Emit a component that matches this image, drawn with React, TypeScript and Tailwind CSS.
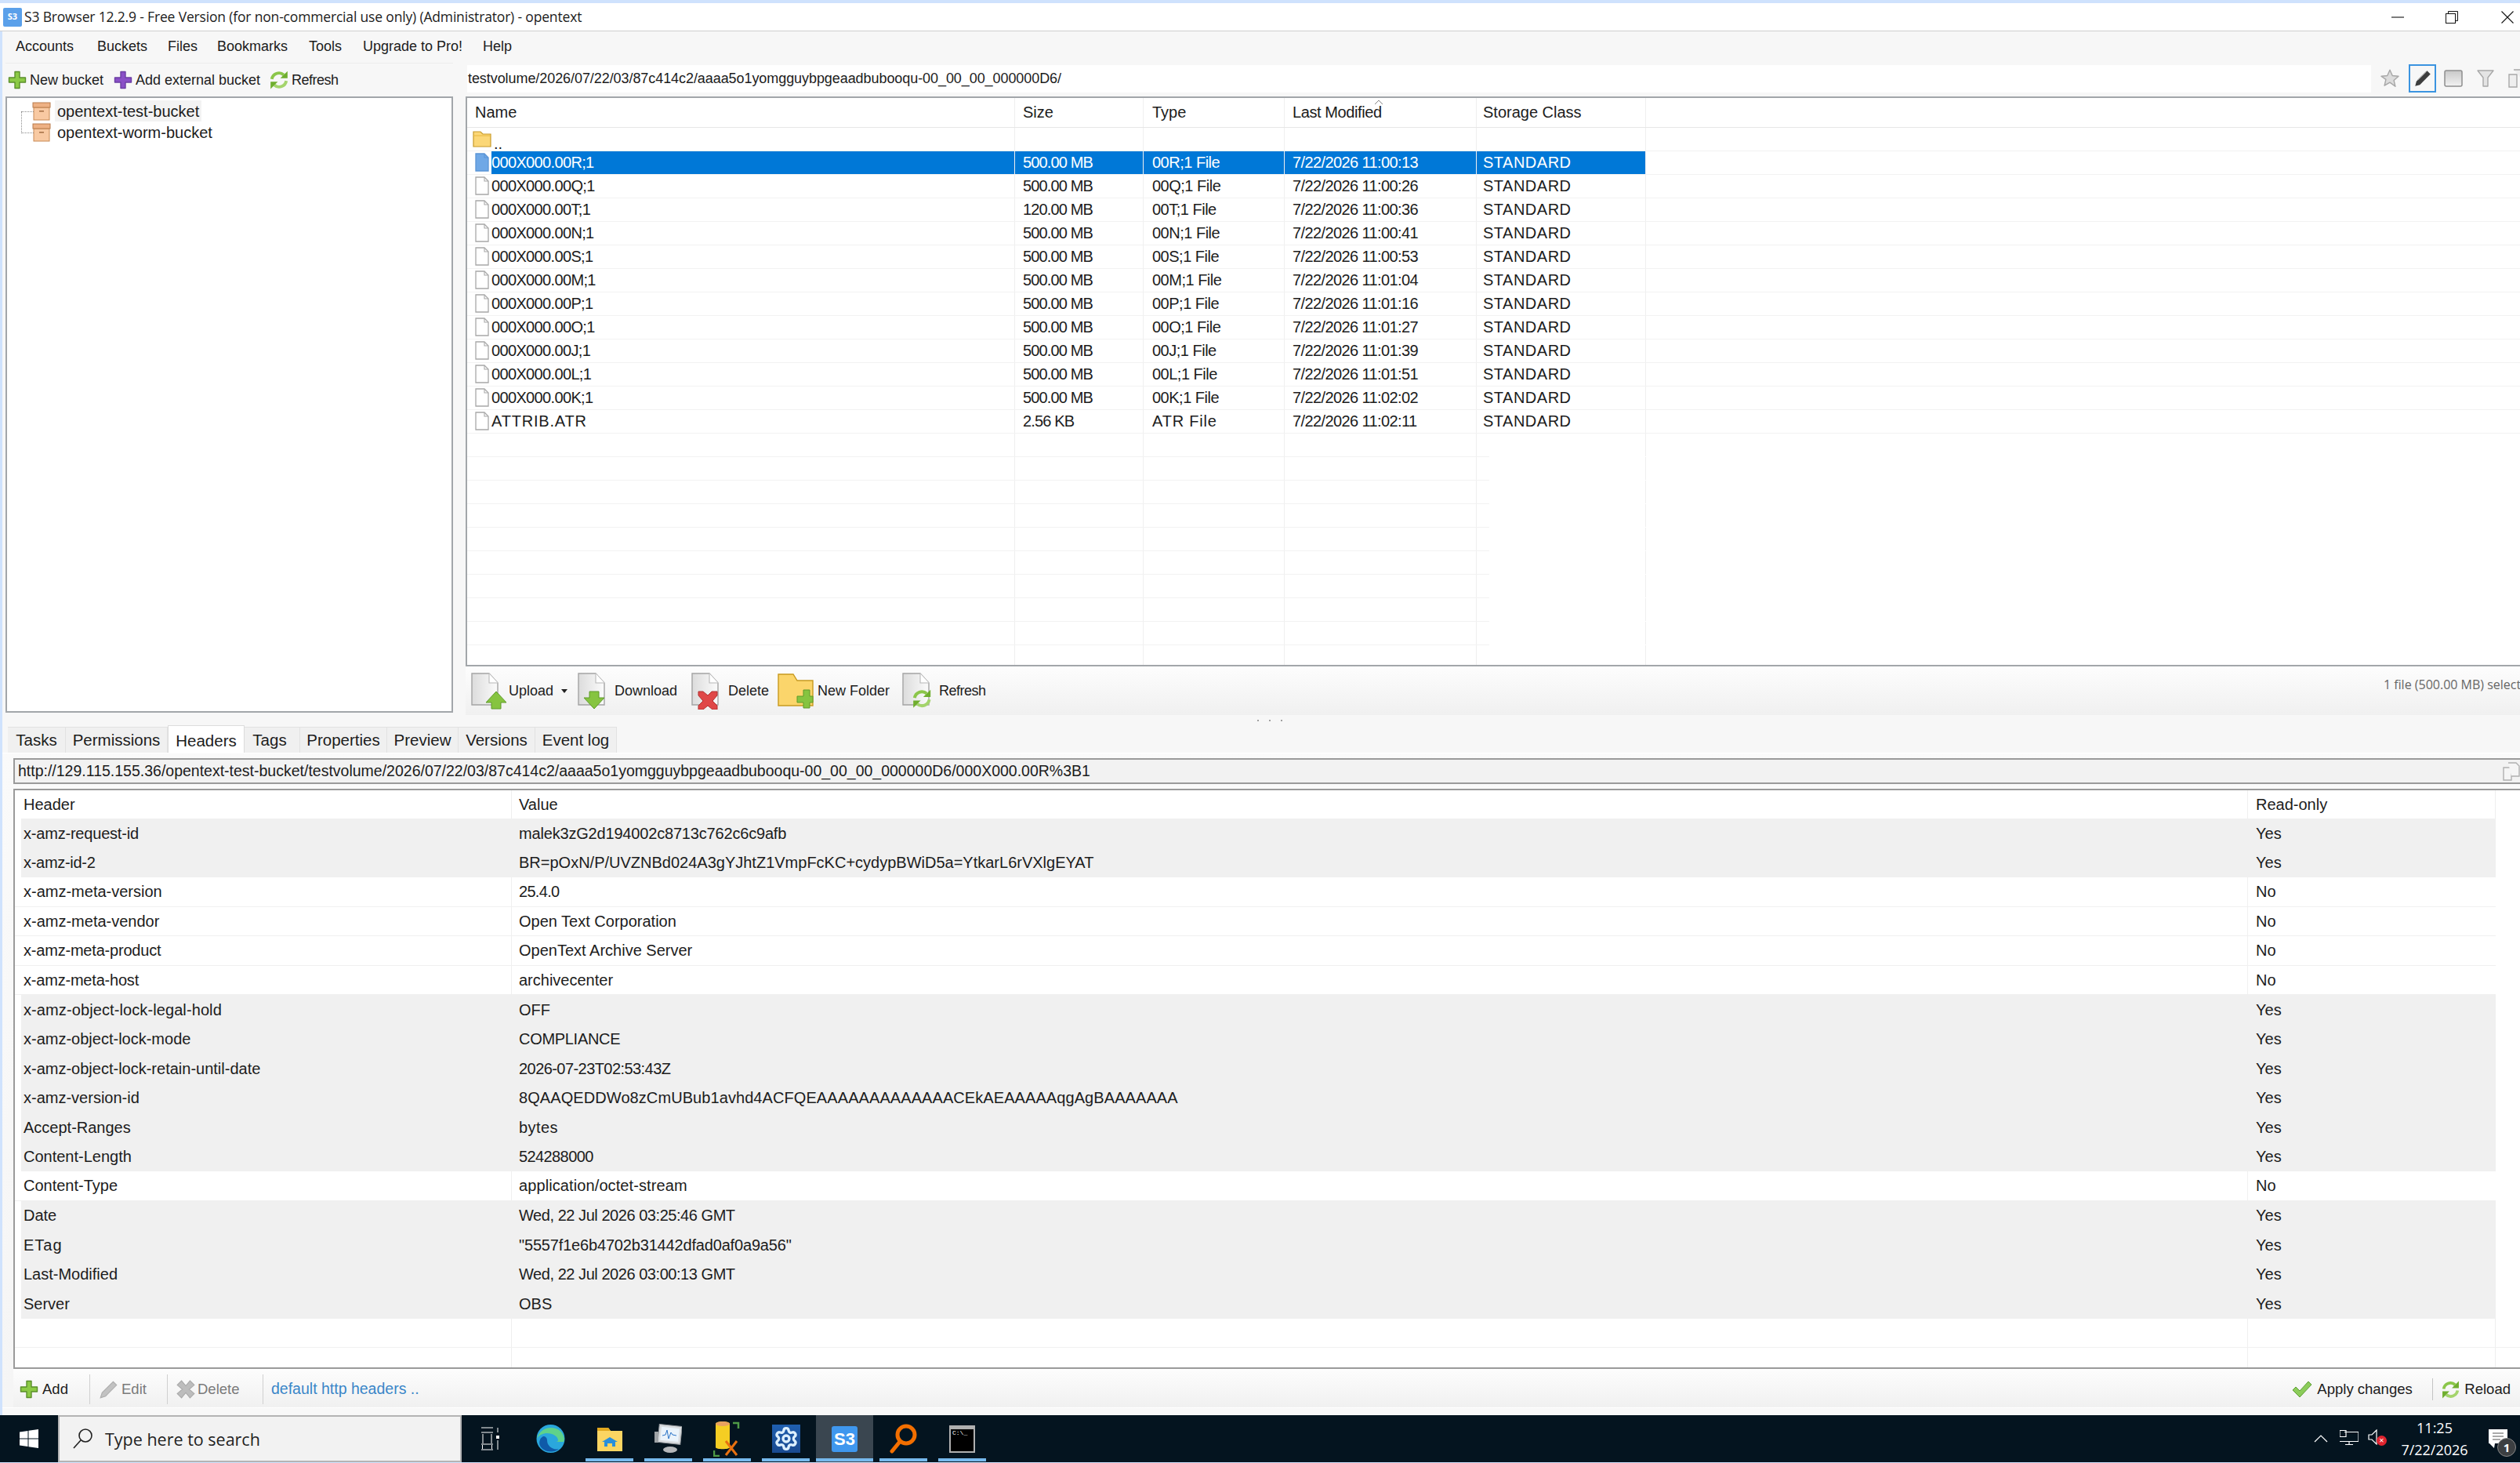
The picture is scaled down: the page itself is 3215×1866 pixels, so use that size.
import React from "react";
import { Settings } from "lucide-react";

const P = ({ c, s = "#5a8f2a", z = 24 }: { c: string; s?: string; z?: number }) => (
  <svg width={z} height={z} viewBox="0 0 24 24" className="shrink-0">
    <path d="M9 1.5h6v7.5h7.5v6H15v7.5H9V15H1.5V9H9z" fill={c} stroke={s} strokeWidth="1.4" strokeLinejoin="round" />
  </svg>
);
const R = ({ z = 26 }: { z?: number }) => (
  <svg width={z} height={z} viewBox="0 0 24 24" className="shrink-0">
    <path d="M3.5 11a8.5 8.5 0 0 1 14-5" fill="none" stroke="#8bc64a" strokeWidth="3.6" />
    <path d="M22 1.5V10h-8.5z" fill="#6fae2e" />
    <path d="M20.5 13a8.5 8.5 0 0 1-14 5" fill="none" stroke="#a4d46c" strokeWidth="3.6" />
    <path d="M2 22.5V14h8.5z" fill="#6fae2e" />
  </svg>
);
const BucketIcon = () => (
  <svg width="24" height="24" viewBox="0 0 24 24" className="shrink-0">
    <rect x="2" y="7" width="20" height="16" fill="#f8c9a2" stroke="#c98a55" />
    <rect x="1" y="1" width="22" height="6" fill="#eeb184" stroke="#b97d4c" />
    <rect x="9" y="11" width="6" height="1.6" fill="#a87348" />
  </svg>
);
const FileIcon = ({ sel }: { sel?: boolean }) => (
  <svg width="18" height="24" viewBox="0 0 18 24" className="shrink-0">
    <path d="M1 1h11l5 5v17H1z" fill={sel ? "#6fa8e6" : "#fff"} stroke={sel ? "#5a94d6" : "#a8a8a8"} strokeWidth="1.3" />
    <path d="M12 1v5h5" fill="none" stroke={sel ? "#5a94d6" : "#a8a8a8"} strokeWidth="1.1" />
  </svg>
);
const FolderSmall = () => (
  <svg width="24" height="22" viewBox="0 0 24 22" className="shrink-0">
    <path d="M1 2h9l3 3h10v16H1z" fill="#fbd777" stroke="#c79a2a" strokeWidth="1.2" />
    <path d="M1 7h22" stroke="#e8b840" />
  </svg>
);
const Doc = ({ children }: { children?: React.ReactNode }) => (
  <svg width="46" height="48" viewBox="0 0 46 48" className="shrink-0">
    <defs>
      <linearGradient id="dg" x1="0" y1="0" x2="1" y2="0">
        <stop offset="0" stopColor="#dcdcdc" />
        <stop offset="1" stopColor="#fbfbfb" />
      </linearGradient>
    </defs>
    <path d="M2 2h22l11 12v28H2z" fill="url(#dg)" stroke="#a4a4a4" strokeWidth="1.4" />
    <path d="M24 2v12h11" fill="#fff" stroke="#b8b8b8" strokeWidth="1.1" />
    {children}
  </svg>
);

const Cell = ({ w, pl, children, line = true, cls = "" }: { w: string; pl: string; children?: React.ReactNode; line?: boolean; cls?: string }) => (
  <div className={`${w} ${pl} ${cls} ${line ? "border-r border-[#efefef]" : ""} shrink-0 h-full flex items-center whitespace-nowrap overflow-hidden`}>{children}</div>
);

const files = [
  ["000X000.00R;1", "500.00 MB", "00R;1 File", "7/22/2026 11:00:13"],
  ["000X000.00Q;1", "500.00 MB", "00Q;1 File", "7/22/2026 11:00:26"],
  ["000X000.00T;1", "120.00 MB", "00T;1 File", "7/22/2026 11:00:36"],
  ["000X000.00N;1", "500.00 MB", "00N;1 File", "7/22/2026 11:00:41"],
  ["000X000.00S;1", "500.00 MB", "00S;1 File", "7/22/2026 11:00:53"],
  ["000X000.00M;1", "500.00 MB", "00M;1 File", "7/22/2026 11:01:04"],
  ["000X000.00P;1", "500.00 MB", "00P;1 File", "7/22/2026 11:01:16"],
  ["000X000.00O;1", "500.00 MB", "00O;1 File", "7/22/2026 11:01:27"],
  ["000X000.00J;1", "500.00 MB", "00J;1 File", "7/22/2026 11:01:39"],
  ["000X000.00L;1", "500.00 MB", "00L;1 File", "7/22/2026 11:01:51"],
  ["000X000.00K;1", "500.00 MB", "00K;1 File", "7/22/2026 11:02:02"],
  ["ATTRIB.ATR", "2.56 KB", "ATR File", "7/22/2026 11:02:11"],
];

const headers = [
  ["x-amz-request-id", "malek3zG2d194002c8713c762c6c9afb", "Yes", "tracking-[-0.2px]", "tracking-[-0.18px]"],
  ["x-amz-id-2", "BR=pOxN/P/UVZNBd024A3gYJhtZ1VmpFcKC+cydypBWiD5a=YtkarL6rVXlgEYAT", "Yes", "tracking-[-0.3px]", ""],
  ["x-amz-meta-version", "25.4.0", "No", "", "tracking-[-0.7px]"],
  ["x-amz-meta-vendor", "Open Text Corporation", "No", "", ""],
  ["x-amz-meta-product", "OpenText Archive Server", "No", "tracking-[-0.2px]", ""],
  ["x-amz-meta-host", "archivecenter", "No", "tracking-[-0.2px]", ""],
  ["x-amz-object-lock-legal-hold", "OFF", "Yes", "tracking-[0.1px]", ""],
  ["x-amz-object-lock-mode", "COMPLIANCE", "Yes", "", "tracking-[-0.3px]"],
  ["x-amz-object-lock-retain-until-date", "2026-07-23T02:53:43Z", "Yes", "", "tracking-[-0.56px]"],
  ["x-amz-version-id", "8QAAQEDDWo8zCmUBub1avhd4ACFQEAAAAAAAAAAAAACEkAEAAAAAqgAgBAAAAAAA", "Yes", "", "tracking-[0.08px]"],
  ["Accept-Ranges", "bytes", "Yes", "", "tracking-[0.4px]"],
  ["Content-Length", "524288000", "Yes", "", "tracking-[-0.6px]"],
  ["Content-Type", "application/octet-stream", "No", "", "tracking-[0.1px]"],
  ["Date", "Wed, 22 Jul 2026 03:25:46 GMT", "Yes", "", "tracking-[-0.45px]"],
  ["ETag", "\"5557f1e6b4702b31442dfad0af0a9a56\"", "Yes", "tracking-[1px]", "tracking-[-0.17px]"],
  ["Last-Modified", "Wed, 22 Jul 2026 03:00:13 GMT", "Yes", "", "tracking-[-0.45px]"],
  ["Server", "OBS", "Yes", "", ""],
];

const tabs = [
  ["Tasks", "w-[74px]"],
  ["Permissions", "w-[130px]"],
  ["Headers", "w-[98px]"],
  ["Tags", "w-[71px] pr-[6px]"],
  ["Properties", "w-[111px]"],
  ["Preview", "w-[91px]"],
  ["Versions", "w-[98px]"],
  ["Event log", "w-[104px]"],
];

const menus = [
  ["Accounts", "w-[104px]"],
  ["Buckets", "w-[90px]"],
  ["Files", "w-[63px]"],
  ["Bookmarks", "w-[117px]"],
  ["Tools", "w-[69px]"],
  ["Upgrade to Pro!", "w-[153px]"],
  ["Help", "w-[60px]"],
];

const TaskIcon = ({ on = true, active = false, children }: { on?: boolean; active?: boolean; children: React.ReactNode }) => (
  <div className="w-[75px] relative h-full flex items-center justify-center shrink-0">
    {active && <div className="absolute left-px right-px top-0 bottom-0 bg-[#3a4650]" />}
    <div className="relative">{children}</div>
    {on && <div className={`absolute bottom-[1px] h-[4px] bg-[#76b9ed] ${active ? "left-px right-px" : "left-[7px] right-[7px]"}`} />}
  </div>
);

export default function App() {
  return (
    <div className="w-[3215px] h-[1866px] overflow-hidden flex flex-col bg-[#cfe2fd] text-[#1c1c1c] text-[20px] font-['Liberation_Sans',sans-serif]">
      <div className="h-[4px] shrink-0" />
      {/* title bar */}
      <div className="h-[36px] shrink-0 bg-white border-b border-[#cfcfcf] flex items-center font-['Open_Sans',sans-serif] text-[17.5px]">
        <div className="w-[24px] h-[24px] ml-[4px] rounded-[2px] bg-[#5aa0ea] text-white text-[11px] font-bold flex items-center justify-center shrink-0">S3</div>
        <span className="ml-[3px] tracking-[-0.17px] whitespace-nowrap">S3 Browser 12.2.9 - Free Version (for non-commercial use only) (Administrator) - opentext</span>
        <div className="ml-auto flex items-center h-full">
          <svg width="16" height="16" viewBox="0 0 16 16" className="mr-[53px]"><path d="M0 8h16" stroke="#111" strokeWidth="1.1" /></svg>
          <svg width="16" height="16" viewBox="0 0 16 16" className="mr-[55px]"><rect x="0.5" y="3.5" width="12" height="12" fill="none" stroke="#111" /><path d="M3.5 3.5v-3h12v12h-3" fill="none" stroke="#111" /></svg>
          <svg width="16" height="16" viewBox="0 0 16 16" className="mr-[8px]"><path d="M0.5 0.5l15 15M15.5 0.5l-15 15" stroke="#111" strokeWidth="1.1" /></svg>
        </div>
      </div>

      <div className="ml-[3px] flex-1 min-h-0 flex flex-col bg-[#f7f7f7]">
        {/* menu */}
        <div className="h-[40px] shrink-0 flex items-center pl-[17px] pb-[2px] bg-[#f7f7f7] text-[18px]">
          {menus.map(([m, w]) => (
            <div key={m} className={`${w} whitespace-nowrap`}>{m}</div>
          ))}
        </div>

        {/* main split */}
        <div className="h-[832px] shrink-0 flex">
          <div className="w-[575px] shrink-0 pl-[4px] flex flex-col">
            <div className="h-[43px] shrink-0 flex items-center pl-[3px] border-t border-[#ededed] text-[18px]">
              <P c="#8cca46" />
              <span className="ml-[4px] w-[107px] whitespace-nowrap">New bucket</span>
              <P c="#8a4fc7" s="#6b3ea3" />
              <span className="ml-[4px] w-[170px] whitespace-nowrap">Add external bucket</span>
              <R />
              <span className="ml-[3px] tracking-[-0.5px]">Refresh</span>
            </div>
            <div className="h-[786px] shrink-0 bg-white border-2 border-[#a2a6aa] relative pt-[3px] pl-[32px]">
              <div className="absolute left-[18px] top-[17px] w-[16px] h-[28px] border-l border-b border-dotted border-[#8a8a8a]" />
              <div className="absolute left-[18px] top-[17px] w-[16px] border-t border-dotted border-[#8a8a8a]" />
              <div className="h-[27px] flex items-center">
                <BucketIcon />
                <span className="ml-[5px] px-[3px] h-full flex items-center bg-[#f3f3f3]">opentext-test-bucket</span>
              </div>
              <div className="h-[27px] flex items-center">
                <BucketIcon />
                <span className="ml-[5px] px-[3px]">opentext-worm-bucket</span>
              </div>
            </div>
          </div>

          <div className="flex-1 min-w-0 ml-[16px] flex flex-col overflow-hidden">
            {/* path bar */}
            <div className="h-[43px] shrink-0 flex items-center pb-[4px]">
              <div className="flex-1 ml-[2px] h-[35px] mt-[1px] bg-white flex items-center pl-[1px] whitespace-nowrap text-[18px] tracking-[-0.07px]">testvolume/2026/07/22/03/87c414c2/aaaa5o1yomgguybpgeaadbubooqu-00_00_00_000000D6/</div>
              <div className="w-[190px] h-[36px] shrink-0 flex items-center">
                <svg width="26" height="26" viewBox="0 0 24 24" className="ml-[11px] shrink-0"><path d="M12 2l3 6.8 7.2.7-5.5 4.8 1.7 7.2L12 16.7 5.600 20.500l1.700-7.200L1.800 9.500 9 8.800z" fill="#dcdcdc" stroke="#a6a6a6" strokeWidth="1.3" strokeLinejoin="round" /></svg>
                <div className="ml-[11px] w-[35px] h-[36px] border-2 border-[#3b94e0] flex items-center justify-center shrink-0">
                  <svg width="26" height="26" viewBox="0 0 24 24"><path d="M3 21l1.500-5.500L17 3l4 4L8.500 19.500z" fill="#3d3d3d" /><path d="M6 14L16 4" stroke="#aaa" strokeWidth="1" /></svg>
                </div>
                <svg width="24" height="22" viewBox="0 0 24 22" className="ml-[10px] shrink-0"><defs><linearGradient id="bg1" x1="0" y1="0" x2="0" y2="1"><stop offset="0" stopColor="#c8c8c8" /><stop offset="1" stopColor="#f2f2f2" /></linearGradient></defs><rect x="1" y="1" width="22" height="20" rx="2" fill="url(#bg1)" stroke="#8f8f8f" strokeWidth="1.500" /></svg>
                <svg width="22" height="26" viewBox="0 0 22 26" className="ml-[18px] shrink-0"><path d="M1 3h20l-7 9v11h-6V12z" fill="#e4e4e4" stroke="#a8a8a8" strokeWidth="1.400" strokeLinejoin="round" /></svg>
                <svg width="22" height="26" viewBox="0 0 22 26" className="ml-[18px] shrink-0"><path d="M1 8h10v16H1z" fill="#eee" stroke="#a8a8a8" strokeWidth="1.400" /><path d="M7 2h10l4 4v13" fill="#eee" stroke="#a8a8a8" strokeWidth="1.400" /></svg>
              </div>
            </div>

            {/* file list */}
            <div className="h-[727px] shrink-0 bg-white border-y-2 border-l-2 border-[#a2a6aa] overflow-hidden">
              <div className="h-[37.5px] flex border-b border-[#e6e6e6] relative">
                <Cell w="w-[699px]" pl="pl-[10px]">Name</Cell>
                <Cell w="w-[164px]" pl="pl-[10px]">Size</Cell>
                <Cell w="w-[180px]" pl="pl-[11px]">Type</Cell>
                <Cell w="w-[245px]" pl="pl-[10px]" cls="tracking-[-0.4px]">Last Modified</Cell>
                <Cell w="w-[216px]" pl="pl-[8px]">Storage Class</Cell>
                <svg width="12" height="6" viewBox="0 0 12 6" className="absolute left-[1157px] top-[2px]"><path d="M1 6l5-5 5 5" fill="none" stroke="#888" /></svg>
              </div>
              <div className="h-[30px] flex border-b border-[#f2f2f2]">
                <div className="w-[699px] pl-[7px] h-full shrink-0 border-r border-[#efefef] flex items-center">
                  <FolderSmall />
                  <span className="ml-[3px] leading-[18px] self-end">..</span>
                </div>
                <Cell w="w-[164px]" pl="" /><Cell w="w-[180px]" pl="" /><Cell w="w-[245px]" pl="" /><Cell w="w-[216px]" pl="" />
              </div>
              {files.map((f, i) => {
                const sel = i === 0;
                const last = i === files.length - 1;
                const t = sel ? "bg-[#0078d7] text-white" : "";
                return (
                  <div key={f[0]} className="h-[30px] flex border-b border-[#f2f2f2]">
                    <div className="w-[699px] h-full flex items-center border-r border-[#efefef] pl-[10px] shrink-0">
                      <FileIcon sel={sel} />
                      <div className={`ml-[3px] flex-1 h-full flex items-center ${t} ${last ? "tracking-[0.8px]" : "tracking-[-0.65px]"}`}>{f[0]}</div>
                    </div>
                    <Cell w="w-[164px]" pl="pl-[10px]" cls={`${t} tracking-[-0.85px]`}>{f[1]}</Cell>
                    <Cell w="w-[180px]" pl="pl-[11px]" cls={`${t} ${last ? "tracking-[0.8px]" : "tracking-[-0.5px]"}`}>{f[2]}</Cell>
                    <Cell w="w-[245px]" pl="pl-[10px]" cls={`${t} tracking-[-0.6px]`}>{f[3]}</Cell>
                    <Cell w="w-[216px]" pl="pl-[8px]" cls={`${t} tracking-[0.5px]`}>STANDARD</Cell>
                  </div>
                );
              })}
              {Array.from({ length: 10 }).map((_, i) => (
                <div key={i} className="h-[30px] flex">
                  <div className="w-[1304px] flex h-full border-b border-[#f2f2f2]">
                    <Cell w="w-[699px]" pl="" /><Cell w="w-[164px]" pl="" /><Cell w="w-[180px]" pl="" /><Cell w="w-[245px]" pl="" /><Cell w="w-[216px]" pl="" />
                  </div>
                </div>
              ))}
            </div>

            {/* lower toolbar */}
            <div className="h-[62px] shrink-0 flex items-center pl-[6px] bg-linear-to-b from-[#fdfdfd] to-[#f0f0f0] text-[18px] whitespace-nowrap relative">
              <Doc>
                <path d="M33 25l13 14h-7v8H27v-8h-7z" fill="#86c440" stroke="#5e9a2a" />
              </Doc>
              <span className="ml-[3px] w-[56px]">Upload</span>
              <svg width="8" height="5" viewBox="0 0 8 5" className="ml-[11px] shrink-0"><path d="M0 0h8L4 5z" fill="#222" /></svg>
              <div className="ml-[12px]" />
              <Doc>
                <path d="M22 47L9 33h7V25h12v8h7z" fill="#86c440" stroke="#5e9a2a" />
              </Doc>
              <span className="ml-[2px] w-[80px]">Download</span>
              <div className="ml-[17px]" />
              <Doc>
                <path d="M22 30l5-5h7v5l-6 7 6 6v5h-6l-6-5-6 5h-6v-5l6-6-6-7v-5h6z" fill="#e04848" stroke="#b03030" />
              </Doc>
              <span className="ml-[2px] w-[50px]">Delete</span>
              <div className="ml-[13px]" />
              <svg width="46" height="48" viewBox="0 0 46 48" className="shrink-0">
                <path d="M1 3h19l5 8h20v32H1z" fill="#fbd56b" stroke="#c89a20" strokeWidth="1.400" />
                <path d="M25 31h8v-8h8v8h4v8h-4v7h-8v-7h-8z" fill="#86c440" stroke="#5e9a2a" />
              </svg>
              <span className="ml-[5px] w-[91px]">New Folder</span>
              <div className="ml-[16px]" />
              <Doc>
                <g transform="translate(13 21) scale(1.100)"><path d="M3.500 11a8.500 8.500 0 0 1 14-5" fill="none" stroke="#8bc64a" strokeWidth="3.600" /><path d="M22 1.500V10h-8.500z" fill="#6fae2e" /><path d="M20.500 13a8.500 8.500 0 0 1-14 5" fill="none" stroke="#a4d46c" strokeWidth="3.600" /><path d="M2 22.500V14h8.500z" fill="#6fae2e" /></g>
              </Doc>
              <span className="ml-[2px] tracking-[-0.5px]">Refresh</span>
              <span className="ml-auto text-[#666] text-[16px] self-start mt-[11px] font-['Open_Sans',sans-serif] translate-x-[20px]">1 file (500.00 MB) selected</span>
            </div>
          </div>
        </div>

        {/* sash */}
        <div className="h-[13px] shrink-0 flex items-center justify-center bg-[#f7f7f7] gap-[13px] pl-[22px]">
          <span className="w-[2px] h-[2px] bg-[#a0a0a0]" /><span className="w-[2px] h-[2px] bg-[#a0a0a0]" /><span className="w-[2px] h-[2px] bg-[#a0a0a0]" />
        </div>

        {/* tabs */}
        <div className="h-[35px] shrink-0 flex items-end pl-[7px] text-[20.5px]">
          {tabs.map(([t, w]) =>
            t === "Headers" ? (
              <div key={t} className={`${w} h-[35px] bg-white border-x border-t border-[#dcdcdc] flex items-start pt-[4px] justify-center whitespace-nowrap`}>{t}</div>
            ) : (
              <div key={t} className={`${w} h-[33px] bg-[#f0f0f0] border-t border-r border-[#e2e2e2] flex items-center justify-center whitespace-nowrap`}>{t}</div>
            )
          )}
        </div>

        {/* detail panel */}
        <div className="h-[835px] shrink-0 pl-[14px] pt-[6px] bg-linear-to-b from-[#fafafa] to-[#f5f5f5] border-t border-white flex flex-col">
          <div className="h-[33px] shrink-0 border-y-2 border-l-2 border-[#9a9a9a] bg-[#f2f2f2] flex items-center pl-[4px] whitespace-nowrap text-[19.5px]">
            <span>http://129.115.155.36/opentext-test-bucket/testvolume/2026/07/22/03/87c414c2/aaaa5o1yomgguybpgeaadbubooqu-00_00_00_000000D6/000X000.00R%3B1</span>
            <svg width="22" height="26" viewBox="0 0 22 26" className="ml-auto mr-[0px]"><path d="M1 8h10v16H1z" fill="#f5f5f5" stroke="#b0b0b0" strokeWidth="1.400" /><path d="M7 2h10l4 4v13H11" fill="#f5f5f5" stroke="#b0b0b0" strokeWidth="1.400" /></svg>
          </div>

          <div className="h-[740px] mt-[6px] shrink-0 bg-white border-y-2 border-l-2 border-[#9a9a9a] overflow-hidden flex flex-col">
            <div className="h-[36px] shrink-0 flex">
              <Cell w="w-[634px]" pl="pl-[11px]">Header</Cell>
              <Cell w="w-[2215px]" pl="pl-[9px]">Value</Cell>
              <Cell w="w-[316px]" pl="pl-[10px]">Read-only</Cell>
            </div>
            {headers.map((h) => {
              const gray = h[2] === "Yes";
              return (
                <div key={h[0]} className="h-[37.5px] shrink-0 flex">
                  <div className={`w-[8px] shrink-0 ${gray ? "" : "border-b border-[#f0f0f0]"}`} />
                  <div className={`w-[3157px] shrink-0 flex h-full ${gray ? "bg-[#f0f0f0]" : "bg-white border-b border-[#f0f0f0]"}`}>
                    <div className={`w-[626px] shrink-0 pl-[3px] flex items-center whitespace-nowrap ${h[3]} ${gray ? "" : "border-r border-[#f0f0f0]"}`}>{h[0]}</div>
                    <div className={`w-[2215px] shrink-0 pl-[9px] flex items-center whitespace-nowrap ${h[4]} ${gray ? "" : "border-r border-[#f0f0f0]"}`}>{h[1]}</div>
                    <div className="w-[316px] shrink-0 pl-[10px] flex items-center whitespace-nowrap">{h[2]}</div>
                  </div>
                </div>
              );
            })}
            {[0, 1].map((i) => (
              <div key={i} className="h-[37px] shrink-0 flex border-b border-[#f0f0f0]">
                <Cell w="w-[634px]" pl="" /><Cell w="w-[2215px]" pl="" /><Cell w="w-[316px]" pl="" />
              </div>
            ))}
          </div>

          {/* bottom bar */}
          <div className="h-[50px] shrink-0 flex items-center pl-[8px] pt-[2px] bg-linear-to-b from-[#fdfdfd] to-[#f0f0f0] whitespace-nowrap text-[18.5px]">
            <P c="#8cca46" />
            <span className="ml-[5px] w-[60px]">Add</span>
            <div className="w-px h-[38px] bg-[#d0d0d0]" />
            <svg width="26" height="26" viewBox="0 0 24 24" className="ml-[11px]"><path d="M2 22l2-6L17 3l4 4L8 20z" fill="#c2c2c2" stroke="#adadad" /></svg>
            <span className="ml-[3px] w-[58px] text-[#7a7a7a]">Edit</span>
            <div className="w-px h-[38px] bg-[#d0d0d0]" />
            <svg width="26" height="26" viewBox="0 0 24 24" className="ml-[10px]"><path d="M12 8l5-6 5 5-6 5 6 5-5 5-5-6-5 6-5-5 6-5-6-5 5-5z" fill="#bdbdbd" stroke="#a8a8a8" /></svg>
            <span className="ml-[2px] w-[83px] text-[#7a7a7a]">Delete</span>
            <div className="w-px h-[38px] bg-[#d0d0d0]" />
            <span className="ml-[10px] text-[#3a86c8] text-[19.5px]">default http headers ..</span>
            <div className="ml-auto flex items-center h-full">
              <svg width="26" height="22" viewBox="0 0 26 22"><path d="M1 12l4-4 5 5L21 1l4 4-15 16z" fill="#8ccc5a" stroke="#5f9e38" /></svg>
              <span className="ml-[6px] w-[147px]">Apply changes</span>
              <div className="w-px h-[28px] bg-[#c4c4c4]" />
              <span className="ml-[10px]"><R z={25} /></span>
              <span className="ml-[5px] mr-[12px]">Reload</span>
            </div>
          </div>
        </div>

        <div className="h-[10px] shrink-0 bg-[#f8f8f8] border-t border-white" />
      </div>

      {/* taskbar */}
      <div className="h-[60px] shrink-0 bg-[#04141f] flex items-center">
        <div className="w-[74px] h-full shrink-0 flex items-center justify-center">
          <svg width="24" height="24" viewBox="0 0 24 24"><path d="M0 3.500l10.500-1.500v9.500H0zM11.500 1.800L24 0v11.500H11.500zM0 12.500h10.500V22L0 20.500zM11.500 12.500H24V24l-12.500-1.800z" fill="#fff" /></svg>
        </div>
        <div className="w-[515px] h-full shrink-0 bg-[#f2f2f2] border-2 border-[#b4b4b4] flex items-center pl-[16px] font-['Open_Sans',sans-serif] text-[21.5px] text-[#222]">
          <svg width="28" height="28" viewBox="0 0 28 28"><circle cx="17" cy="10" r="8" fill="none" stroke="#222" strokeWidth="1.600" /><path d="M11 16L2 26" stroke="#222" strokeWidth="1.600" /></svg>
          <span className="ml-[14px] pt-[2px]">Type here to search</span>
        </div>
        <div className="w-[24px] shrink-0" />
        <svg width="25" height="30" viewBox="0 0 25 30" className="shrink-0"><path d="M1 1h15M1 7h15M3 9v12M14 9v12M1 22h15M1 29h15M2.500 23v5M14.500 23v5" stroke="#fff" fill="none" /><path d="M22 1v6M22 17v12" stroke="#fff" /><rect x="20" y="11" width="4" height="4" fill="#fff" /></svg>
        <div className="w-[27px] shrink-0" />
        <div className="h-full flex items-center">
          <TaskIcon on={false}>
            <svg width="37" height="38" viewBox="0 0 37 38" className="block"><circle cx="18.500" cy="19" r="18" fill="#2aa7dc" /><path d="M36 20c-1-10-9-15-17-15C10 5 3 11 1 19c3-5 8-7 13-7 7 0 14 4 14 9 0 1-1 2-3 2h10z" fill="#5fd28a" /><path d="M14 21c0 8 8 13 15 11-7 6-20 4-24-4-2-5 0-10 4-12 3 0 5 2 5 5z" fill="#0f5aa8" /></svg>
          </TaskIcon>
          <TaskIcon>
            <svg width="32" height="32" viewBox="0 0 32 32" className="block"><path d="M0 2h14l3 4h15v26H0z" fill="#fcd562" /><path d="M0 2h14l3 4H0z" fill="#e2a91f" /><path d="M9 26v-6h-3l10-6 10 6h-3v6z" fill="#2a8fdc" /><rect x="13" y="22" width="6" height="10" fill="#fcd562" /></svg>
          </TaskIcon>
          <TaskIcon>
            <svg width="35" height="38" viewBox="0 0 35 38" className="block"><rect x="5" y="2" width="29" height="23" fill="#d9dcdf" stroke="#8f9397" transform="rotate(6 20 14)" /><rect x="8" y="5" width="23" height="17" fill="#eaf3fb" transform="rotate(6 20 14)" /><path d="M10 15l4-1 2-6 2 11 3-8 2 3 5 1" fill="none" stroke="#2a74c8" /><ellipse cx="20" cy="33" rx="9" ry="4" fill="#b5b7ba" /><path d="M0 10h5v14H0z" fill="#9fa3a6" /></svg>
          </TaskIcon>
          <TaskIcon>
            <svg width="35" height="46" viewBox="0 0 35 46" className="block"><path d="M3 4c0-4 18-4 18 0v30c0 3-18 3-18 0z" fill="#f5cd23" /><ellipse cx="12" cy="4" rx="9" ry="3" fill="#e8a060" /><path d="M25 3h7v7M1 38v7h7" fill="none" stroke="#4f9a46" strokeWidth="2.500" /><path d="M16 44l14-18M30 44L16 26" stroke="#e87010" strokeWidth="3" /></svg>
          </TaskIcon>
          <TaskIcon>
            <div className="w-[36px] h-[36px] bg-linear-to-b from-[#1f5fb0] to-[#1a4a90] flex items-center justify-center">
              <Settings size={32} className="text-[#dcefff]" strokeWidth={2.500} />
            </div>
          </TaskIcon>
          <TaskIcon active>
            <div className="w-[33px] h-[33px] rounded-[3px] bg-[#3f97ee] text-white font-bold text-[22px] flex items-center justify-center font-['Liberation_Sans',sans-serif]">S3</div>
          </TaskIcon>
          <TaskIcon>
            <svg width="35" height="38" viewBox="0 0 35 38" className="block"><circle cx="21" cy="14" r="11" fill="none" stroke="#f36f00" strokeWidth="5" /><path d="M12 24L3 35" stroke="#f36f00" strokeWidth="5" strokeLinecap="round" /></svg>
          </TaskIcon>
          <TaskIcon>
            <div className="w-[33px] h-[35px] bg-black border-2 border-[#b0b0b0] border-t-[5px] text-white text-[8px] leading-[10px] pl-[2px] font-['Liberation_Mono',monospace]">C:\_</div>
          </TaskIcon>
        </div>

        <div className="ml-auto flex items-center h-full text-white font-['Open_Sans',sans-serif]">
          <svg width="18" height="10" viewBox="0 0 18 10" className="mr-[15px]"><path d="M1 9l8-8 8 8" fill="none" stroke="#fff" strokeWidth="1.200" /></svg>
          <svg width="24" height="19" viewBox="0 0 24 19" className="mr-[12px] mb-[4px]"><path d="M6 2.500h18v12H0M12 14.500v4M7 18.500h10M0 0.500h8v8H0z" fill="none" stroke="#fff" strokeWidth="1.200" /></svg>
          <div className="relative mr-[19px] mb-[4px]">
            <svg width="24" height="20" viewBox="0 0 24 20"><path d="M1 7h4l6-6v18l-6-6H1z" fill="none" stroke="#fff" strokeWidth="1.200" /></svg>
            <div className="absolute left-[11px] top-[8px] w-[13px] h-[13px] rounded-full bg-[#e0242f] text-white text-[11px] leading-[12px] text-center">×</div>
          </div>
          <div className="w-[84px] flex flex-col items-center text-[18px] leading-[28px]">
            <span>11:25</span>
            <span>7/22/2026</span>
          </div>
          <div className="relative w-[24px] ml-[27px] mr-[16px]">
            <svg width="24" height="24" viewBox="0 0 24 24"><path d="M0 0h24v18H8l-1 6-6-6H0z" fill="#fff" /><path d="M5 5h14M5 9h14M5 13h10" stroke="#555" /></svg>
            <div className="absolute left-[11px] top-[11px] w-[24px] h-[24px] rounded-full bg-[#3c3f42] border border-[#888] text-white text-[15px] font-bold flex items-center justify-center">1</div>
          </div>
        </div>
      </div>
      <div className="h-px shrink-0 bg-[#cfe2fd]" />
    </div>
  );
}
